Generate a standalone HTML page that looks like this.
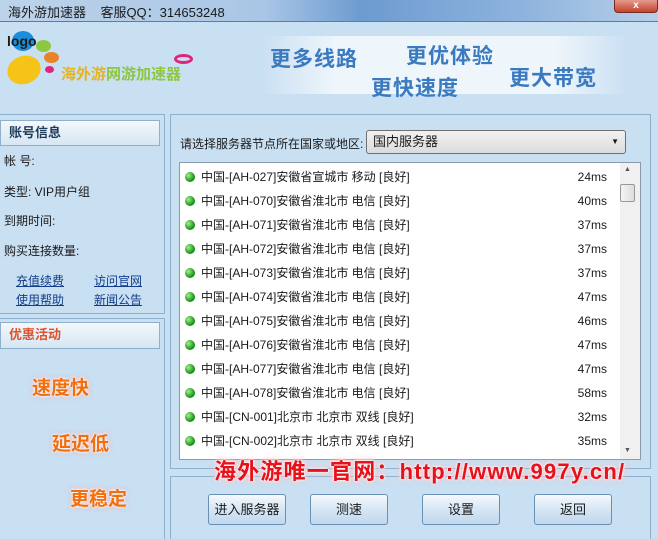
<!DOCTYPE html><html><head><meta charset="utf-8"><style>
*{margin:0;padding:0;box-sizing:border-box}
body{width:658px;height:539px;overflow:hidden;background:#c9dff2;font-family:"Liberation Sans","Noto Sans CJK SC",sans-serif;font-size:12px;color:#1a1a1a;position:relative}
.a{position:absolute}
.tb{left:0;top:0;width:658px;height:22px;background:linear-gradient(90deg,#bcd3ea 0%,#a9c6e6 40%,#6d9bd0 55%,#8fb4de 80%,#b7cfe9 100%);border-bottom:1px solid #5a7da8}
.hdr{background:linear-gradient(#f3f8fc,#d6e6f3);border:1px solid #8fb0cc;font-weight:bold;font-size:13px;padding-left:8px;line-height:24px}
.blue{color:#3a7ac0;font-weight:bold;font-size:21px;letter-spacing:1px}
.lnk{color:#123d8a;text-decoration:underline}
.row{left:185px;width:430px;height:24px;line-height:24px;font-size:12px}
.dot{display:inline-block;width:10px;height:10px;border-radius:50%;background:radial-gradient(circle at 35% 35%,#9ef08a,#1e9a1e 60%,#0d6010);vertical-align:-1px;margin-right:6px}
.ms{position:absolute;right:8px;top:0}
.btn{top:494px;width:78px;height:31px;border:1px solid #6a8fb4;border-radius:3px;background:linear-gradient(#f5f9fd,#d5e6f4 50%,#c1d8ee);text-align:center;line-height:29px;font-size:13px}
.org{color:#f07010;font-weight:bold;font-size:19px;text-shadow:0 0 2px #fff,0 0 3px #fff,0 0 6px #f99}
</style></head><body>
<div class="a tb"></div>
<div class="a" style="left:8px;top:2px;font-size:13px">海外游加速器 &nbsp;&nbsp; 客服QQ：314653248</div>
<div class="a" style="left:614px;top:0;width:44px;height:13px;background:linear-gradient(#e59a8c,#c5432e);border:1px solid #7a2a20;border-top:none;border-radius:0 0 4px 4px;color:#fff;font-size:10px;text-align:center;line-height:11px;font-weight:bold">x</div>
<!-- logo -->
<div class="a" style="left:12px;top:31px;width:22px;height:20px;border-radius:50%;background:#1a8ed8"></div>
<div class="a" style="left:7px;top:33px;font-weight:bold;font-size:14px">logo</div>
<div class="a" style="left:36px;top:40px;width:15px;height:12px;border-radius:50%;background:#8dc63f"></div>
<div class="a" style="left:44px;top:52px;width:15px;height:11px;border-radius:50%;background:#e8832a"></div>
<div class="a" style="left:45px;top:66px;width:9px;height:7px;border-radius:50%;background:#e0247c"></div>
<div class="a" style="left:7px;top:56px;width:34px;height:28px;border-radius:50%;background:#f6c419;transform:rotate(-20deg)"></div>
<div class="a" style="left:174px;top:54px;width:19px;height:10px;border-radius:50%;border:3px solid #e0247c"></div>
<div class="a" style="left:61px;top:63px;font-weight:bold;font-size:15px;color:#e8b31a">海外游<span style="color:#8dc63f">网游加速器</span></div>
<div class="a" style="left:260px;top:36px;width:370px;height:58px;background:linear-gradient(90deg,rgba(240,246,252,0),#eef5fb 20%,#eef5fb 80%,rgba(240,246,252,0))"></div>
<div class="a blue" style="left:270px;top:43px">更多线路</div>
<div class="a blue" style="left:406px;top:40px">更优体验</div>
<div class="a blue" style="left:371px;top:72px">更快速度</div>
<div class="a blue" style="left:509px;top:62px">更大带宽</div>
<!-- left -->
<div class="a" style="left:0;top:114px;width:165px;height:200px;border:1px solid #8fb0cc;border-left:none"></div>
<div class="a hdr" style="left:0;top:120px;width:160px;color:#1d3a5a">账号信息</div>
<div class="a" style="left:4px;top:152px">帐 号:</div>
<div class="a" style="left:4px;top:183px">类型: VIP用户组</div>
<div class="a" style="left:4px;top:212px">到期时间:</div>
<div class="a" style="left:4px;top:242px">购买连接数量:</div>
<div class="a lnk" style="left:16px;top:272px">充值续费</div>
<div class="a lnk" style="left:94px;top:272px">访问官网</div>
<div class="a lnk" style="left:16px;top:291px">使用帮助</div>
<div class="a lnk" style="left:94px;top:291px">新闻公告</div>
<div class="a" style="left:0;top:318px;width:165px;height:221px;border:1px solid #8fb0cc;border-left:none;border-bottom:none"></div>
<div class="a hdr" style="left:0;top:322px;width:160px;height:27px;color:#e0502a">优惠活动</div>
<div class="a org" style="left:32px;top:373px">速度快</div>
<div class="a org" style="left:52px;top:429px">延迟低</div>
<div class="a org" style="left:70px;top:484px">更稳定</div>
<!-- right -->
<div class="a" style="left:170px;top:114px;width:481px;height:355px;border:1px solid #8fb0cc"></div>
<div class="a" style="left:180px;top:135px">请选择服务器节点所在国家或地区:</div>
<div class="a" style="left:366px;top:130px;width:260px;height:24px;border:1px solid #707070;border-radius:3px;background:linear-gradient(#f2f2f2,#dcdcdc);padding-left:6px;line-height:22px;font-size:13px">国内服务器<span style="position:absolute;right:6px;top:0;font-size:8px">▼</span></div>
<div class="a" style="left:179px;top:162px;width:462px;height:298px;background:#fff;border:1px solid #8a9bb0"></div>
<div class="a" style="left:620px;top:163px;width:20px;height:296px;background:#f0f0f0"></div>
<div class="a" style="left:620px;top:184px;width:15px;height:18px;border:1px solid #999;background:linear-gradient(90deg,#f4f4f4,#ddd);border-radius:2px"></div>
<div class="a" style="left:624px;top:166px;font-size:7px;color:#555">▲</div>
<div class="a" style="left:624px;top:447px;font-size:7px;color:#555">▼</div>
<div class="a row" style="top:165px"><span class="dot"></span>中国-[AH-027]安徽省宣城市 移动 [良好]<span class="ms">24ms</span></div>
<div class="a row" style="top:189px"><span class="dot"></span>中国-[AH-070]安徽省淮北市 电信 [良好]<span class="ms">40ms</span></div>
<div class="a row" style="top:213px"><span class="dot"></span>中国-[AH-071]安徽省淮北市 电信 [良好]<span class="ms">37ms</span></div>
<div class="a row" style="top:237px"><span class="dot"></span>中国-[AH-072]安徽省淮北市 电信 [良好]<span class="ms">37ms</span></div>
<div class="a row" style="top:261px"><span class="dot"></span>中国-[AH-073]安徽省淮北市 电信 [良好]<span class="ms">37ms</span></div>
<div class="a row" style="top:285px"><span class="dot"></span>中国-[AH-074]安徽省淮北市 电信 [良好]<span class="ms">47ms</span></div>
<div class="a row" style="top:309px"><span class="dot"></span>中国-[AH-075]安徽省淮北市 电信 [良好]<span class="ms">46ms</span></div>
<div class="a row" style="top:333px"><span class="dot"></span>中国-[AH-076]安徽省淮北市 电信 [良好]<span class="ms">47ms</span></div>
<div class="a row" style="top:357px"><span class="dot"></span>中国-[AH-077]安徽省淮北市 电信 [良好]<span class="ms">47ms</span></div>
<div class="a row" style="top:381px"><span class="dot"></span>中国-[AH-078]安徽省淮北市 电信 [良好]<span class="ms">58ms</span></div>
<div class="a row" style="top:405px"><span class="dot"></span>中国-[CN-001]北京市 北京市 双线 [良好]<span class="ms">32ms</span></div>
<div class="a row" style="top:429px"><span class="dot"></span>中国-[CN-002]北京市 北京市 双线 [良好]<span class="ms">35ms</span></div>
<div class="a" style="left:170px;top:476px;width:481px;height:63px;border:1px solid #8fb0cc;border-bottom:none"></div>
<div class="a" style="left:214px;top:454px;font-size:22px;font-weight:bold;color:#e8101a;letter-spacing:1.2px;white-space:nowrap;text-shadow:0 0 2px #fff,0 0 3px #fff,0 0 6px #fbb,0 0 8px #fcc">海外游唯一官网：http://www.997y.cn/</div>
<div class="a btn" style="left:208px">进入服务器</div>
<div class="a btn" style="left:310px">测速</div>
<div class="a btn" style="left:422px">设置</div>
<div class="a btn" style="left:534px">返回</div>
</body></html>
